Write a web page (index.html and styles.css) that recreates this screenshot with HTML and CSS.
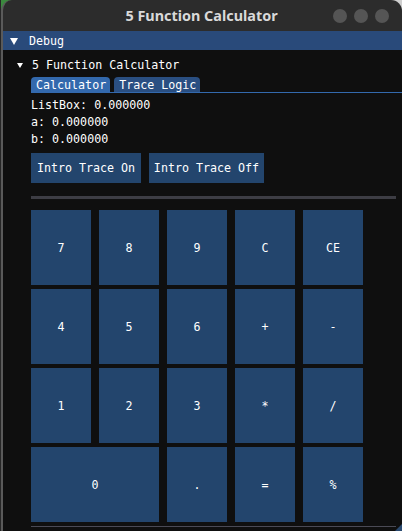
FILE: index.html
```html
<!DOCTYPE html>
<html>
<head>
<meta charset="utf-8">
<link rel="stylesheet" href="styles.css">
</head>
<body>
<div class="win">
  <div class="titlebar">
    <span class="title">5 Function Calculator</span>
    <div class="dots"><span class="dot"></span><span class="dot"></span><span class="dot"></span></div>
  </div>
  <div class="header"><span class="arrow-big"></span><span class="htext">Debug</span></div>
  <div class="content">
    <div class="tree"><span class="arrow-small"></span><span>5 Function Calculator</span></div>
    <div class="inner">
      <div class="tabs">
        <div class="tab active">Calculator</div>
        <div class="tab">Trace Logic</div>
      </div>
      <div class="tabline"></div>
      <div class="lines">
        <div class="line">ListBox: 0.000000</div>
        <div class="line">a: 0.000000</div>
        <div class="line">b: 0.000000</div>
      </div>
      <div class="intro">
        <div class="btn w110">Intro Trace On</div>
        <div class="btn w115">Intro Trace Off</div>
      </div>
      <div class="sep thick"></div>
      <div class="grid">
        <div class="key">7</div>
        <div class="key">8</div>
        <div class="key">9</div>
        <div class="key">C</div>
        <div class="key">CE</div>
        <div class="key">4</div>
        <div class="key">5</div>
        <div class="key">6</div>
        <div class="key">+</div>
        <div class="key">-</div>
        <div class="key">1</div>
        <div class="key">2</div>
        <div class="key">3</div>
        <div class="key">*</div>
        <div class="key">/</div>
        <div class="key wide">0</div>
        <div class="key">.</div>
        <div class="key">=</div>
        <div class="key">%</div>
      </div>
      <div class="sep thin"></div>
    </div>
  </div>
  <div class="grip"></div>
</div>
</body>
</html>
```
FILE: styles.css
```css
html, body {
  margin: 0;
  padding: 0;
}
body {
  width: 402px;
  height: 531px;
  overflow: hidden;
  background: linear-gradient(to right, #3b8a3e 0 50%, #cfcfcf 50% 100%);
  font-family: "DejaVu Sans Mono", "Liberation Mono", monospace;
  font-size: 11.67px;
  color: #ffffff;
}
.win {
  position: relative;
  height: 531px;
  display: flex;
  flex-direction: column;
  border-left: 1px solid #262626;
  box-sizing: border-box;
}
.titlebar {
  height: 31px;
  flex: none;
  background: #2c2c2c;
  border-top-left-radius: 11px;
  border-top-right-radius: 11px;
  border-left: 2px solid #5a5a5a;
  display: flex;
  align-items: center;
  justify-content: center;
  position: relative;
}
.title {
  font-family: "Noto Sans", "DejaVu Sans", sans-serif;
  font-weight: 700;
  font-size: 14.4px;
  color: #d9d9d9;
  margin-left: -2px;
}
.dots {
  position: absolute;
  right: 13px;
  top: 9px;
  display: flex;
  gap: 7px;
}
.dot {
  width: 14px;
  height: 14px;
  border-radius: 50%;
  background: #555555;
}
.header {
  height: 19px;
  flex: none;
  background: #294a7a;
  border-left: 2px solid #5a5a5a;
  display: flex;
  align-items: center;
}
.arrow-big {
  width: 0;
  height: 0;
  border-left: 4px solid transparent;
  border-right: 4px solid transparent;
  border-top: 7px solid #ffffff;
  margin-left: 7px;
  margin-top: 1px;
}
.htext {
  margin-left: 11px;
  padding-top: 1px;
}
.content {
  flex: 1;
  background: #0f0f0f;
  border-left: 2px solid #5a5a5a;
  padding-top: 6px;
}
.tree {
  height: 17px;
  line-height: 17px;
  display: flex;
  align-items: center;
  padding-top: 1px;
}
.arrow-small {
  width: 0;
  height: 0;
  border-left: 3px solid transparent;
  border-right: 3px solid transparent;
  border-top: 5px solid #ffffff;
  margin-left: 14px;
  margin-right: 9px;
}
.inner {
  padding-left: 28px;
}
.tabs {
  margin-top: 3px;
  display: flex;
  gap: 4px;
}
.tab {
  height: 15px;
  line-height: 16px;
  padding: 0 4px 0 5px;
  background: #2a4f82;
  border-radius: 4px 4px 0 0;
}
.tab.active {
  background: #3369ad;
}
.tabline {
  height: 1px;
  background: #3369ad;
}
.lines {
  margin-top: 4px;
}
.line {
  height: 17px;
  line-height: 17px;
}
.intro {
  margin-top: 5px;
  display: flex;
  gap: 8px;
}
.btn {
  height: 30px;
  background: #23456d;
  display: flex;
  align-items: center;
  justify-content: center;
}
.w110 { width: 110px; }
.w115 { width: 115px; }
.sep {
  margin-right: 6px;
}
.sep.thick {
  margin-top: 13px;
  height: 3px;
  background: #3d3d44;
}
.grid {
  margin-top: 11px;
  display: grid;
  grid-template-columns: repeat(5, 60px);
  grid-auto-rows: 75px;
  column-gap: 8px;
  row-gap: 4px;
}
.key {
  background: #23456d;
  display: flex;
  align-items: center;
  justify-content: center;
}
.key.wide {
  grid-column: span 2;
}
.sep.thin {
  margin-top: 4px;
  height: 1px;
  background: #4a4a55;
}
.grip {
  position: absolute;
  right: 0;
  bottom: 0;
  width: 0;
  height: 0;
  border-left: 7px solid transparent;
  border-bottom: 7px solid #2a4a70;
}
```
